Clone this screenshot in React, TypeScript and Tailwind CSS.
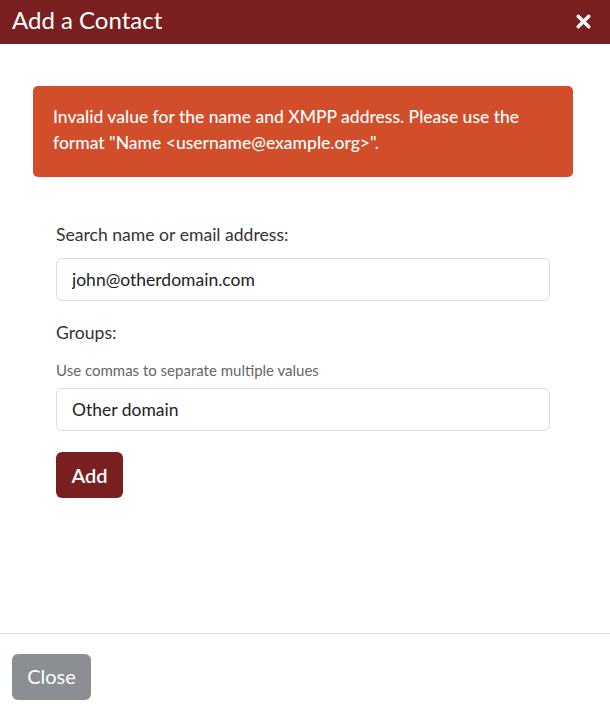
export default function App() {
  return (
    <div className="w-[610px] h-[717px] bg-white flex flex-col font-['Lato','Noto_Sans',sans-serif]">
      <div className="h-[44px] bg-[#7a1f20] flex items-center justify-between pl-3 pr-[18px] pb-[5px]">
        <h2 className="text-[24px] leading-none text-white">Add a Contact</h2>
        <button className="text-white mt-[4px]">
          <svg width="17" height="17" viewBox="0 0 16 16">
            <path d="M3 3 L13 13 M13 3 L3 13" stroke="white" strokeWidth="3.2" strokeLinecap="round" />
          </svg>
        </button>
      </div>

      <div className="flex-1 pl-[33px] pr-[37px] pt-[42px]">
        <div className="bg-[#d24e2b] rounded-[5px] px-5 pt-[18px] pb-[21px] text-white text-[17.5px] leading-[26px] font-medium">
          Invalid value for the name and XMPP address. Please use the format "Name &lt;username@example.org&gt;".
        </div>

        <form className="px-[23px] pt-[46px]">
          <label className="block text-[17.6px] leading-6 text-[#333]">Search name or email address:</label>
          <input
            className="mt-[11px] w-full h-[43px] rounded-[6px] border border-[#dddde3] px-[15px] text-[17.5px] text-[#222] outline-none"
            defaultValue="john@otherdomain.com"
          />
          <label className="block mt-[20px] text-[17.6px] leading-6 text-[#333]">Groups:</label>
          <p className="mt-[16px] text-[15px] leading-[18px] text-[#666]">Use commas to separate multiple values</p>
          <input
            className="mt-[9px] w-full h-[43px] rounded-[6px] border border-[#dddde3] px-[15px] text-[17.5px] text-[#222] outline-none"
            defaultValue="Other domain"
          />
          <button
            type="button"
            className="mt-[21px] h-[46px] w-[67px] rounded-[6px] bg-[#7a1f20] text-white text-[20px] font-semibold"
          >
            Add
          </button>
        </form>
      </div>

      <div className="border-t border-[#e2e2e2] h-[84px] px-3 pt-[20px]">
        <button className="h-[46px] w-[79px] pb-[3px] rounded-[6px] bg-[#8b8f94] text-white text-[20px]">Close</button>
      </div>
    </div>
  );
}
